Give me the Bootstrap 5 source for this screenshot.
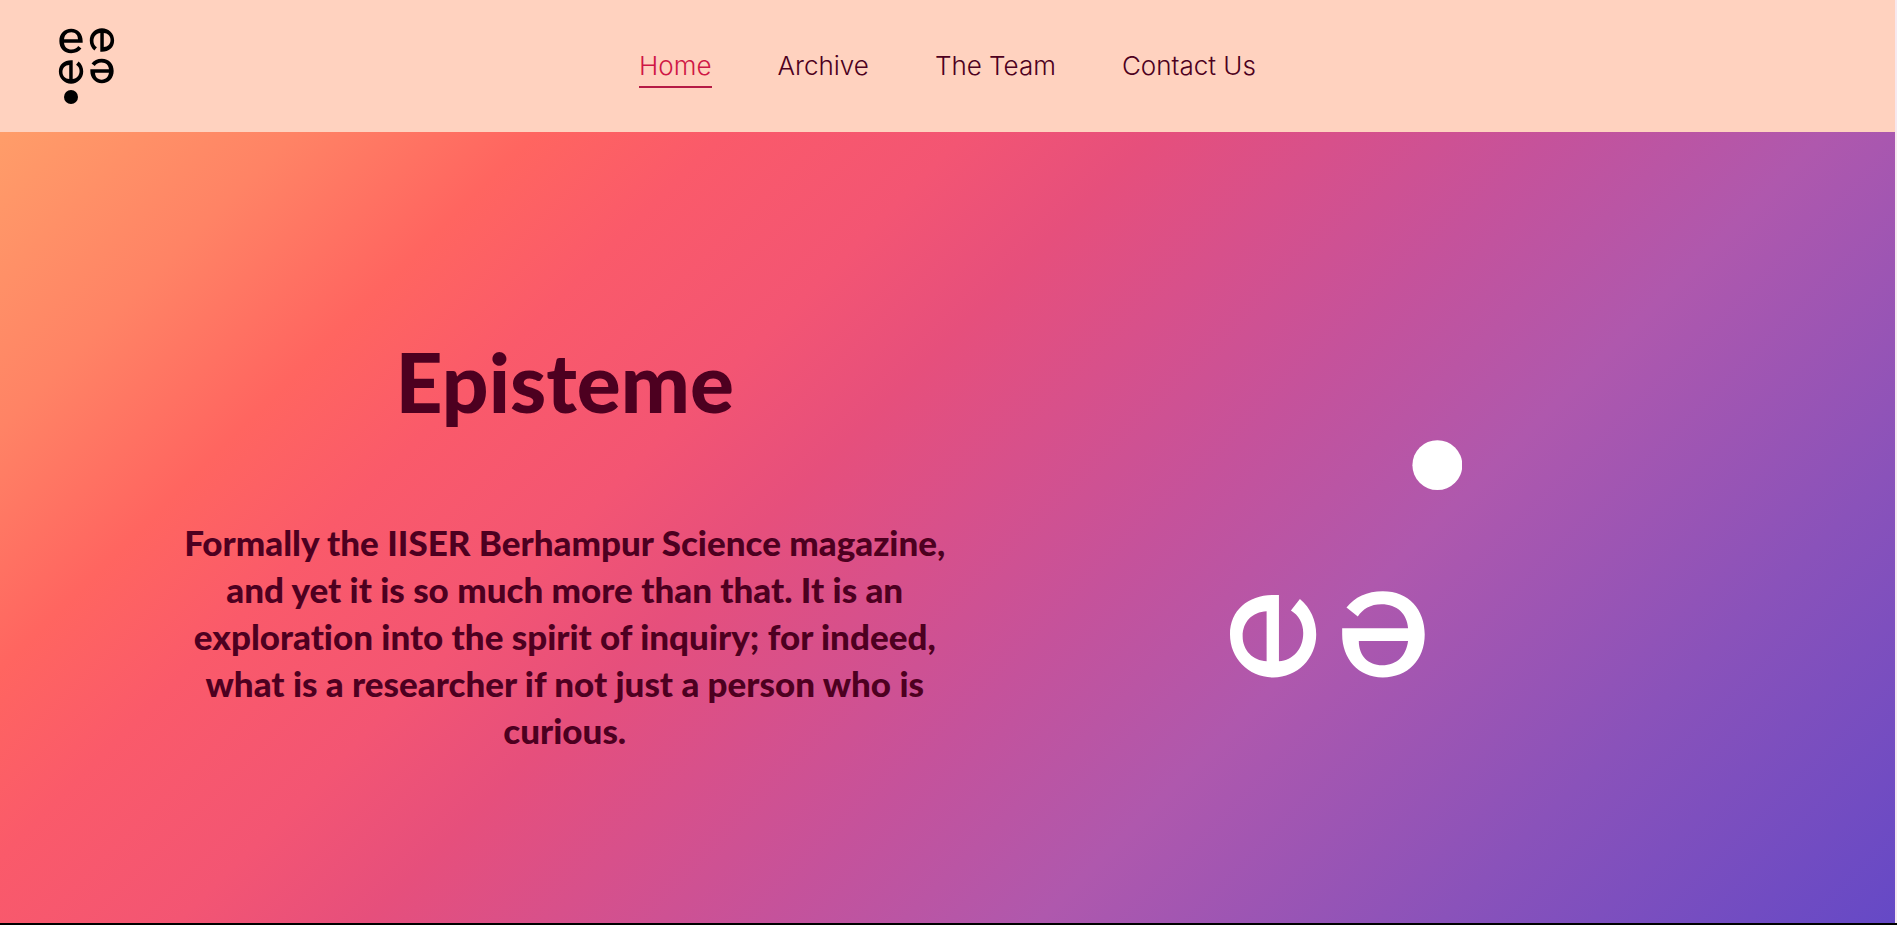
<!DOCTYPE html>
<html lang="en">
<head>
<meta charset="utf-8">
<meta name="viewport" content="width=device-width, initial-scale=1">
<title>Episteme</title>
<link rel="stylesheet" href="https://cdn.jsdelivr.net/npm/bootstrap@5.3.0/dist/css/bootstrap.min.css">
<style>
  :root { --wine: #4d0020; --crimson: #cf1745; --peach: #ffd2bf; }
  body { color: var(--wine); font-family: Lato, "Liberation Sans", sans-serif; background: #000; }
  .page { min-height: 100vh; border-bottom: 2px solid #000; }
  .sheet { border-right: 2px solid #f6e9f0; }
  .site-header { background: var(--peach); display: grid; grid-template-columns: 1fr auto 1fr; min-height: 132px; padding: 0 56px; }
  .brand-mark { width: 60px; height: 80px; }
  .site-nav { gap: 66px; font-family: Inter, "Open Sans", sans-serif; font-weight: 300; font-size: 26px; line-height: 32px; }
  .site-nav .nav-link { color: var(--wine); padding: 6px 0 4px; border-bottom: 2px solid transparent; }
  .site-nav .nav-link.active { color: var(--crimson); border-color: #b51b45; }
  .hero { padding: 0 158px 0 174px; background: linear-gradient(135deg, #ff9d69 0%, #ff8365 11%, #ff6560 20%, #fa5a6a 27%, #f35573 36%, #e64f7c 43%, #d7508b 50%, #c5529b 58%, #af58ad 68%, #8a52ba 83%, #6549c6 100%); }
  .hero-copy { padding-top: 32px; }
  .hero-title { font-size: 82px; line-height: 96px; font-weight: 900; margin-bottom: 90px; }
  .hero-text { font-size: 35px; line-height: 47px; font-weight: 900; font-variant-ligatures: none; }
  .hero-art { width: 232px; height: 238px; margin-top: 62px; }
</style>
</head>
<body>
<svg class="d-none" aria-hidden="true">
  <defs>
    <path id="turned" fill-rule="evenodd" d="M240 521V720C283 717 313 683 313 635C313 606 299 582 276 568L303 533C335 560 352 597 352 640C352 712 295 769 223 769C150 769 93 712 93 640C93 565 150 521 222 521ZM203 570C160 572 131 602 131 645C131 688 162 718 203 720Z"/>
    <path id="flipped" fill-rule="evenodd" d="M430 621H628C625 578 595 549 548 549C515 549 492 563 477 586L443 559C467 528 505 510 552 510C630 510 678 565 678 640C678 715 628 769 552 769C478 769 430 712 430 640ZM480 659H628C622 703 595 732 550 732C508 732 480 703 480 659Z"/>
  </defs>
</svg>
<div class="page d-flex flex-column">
  <div class="sheet d-flex flex-column flex-grow-1">
    <header class="site-header align-items-center">
      <a href="#" aria-label="Episteme home" class="d-inline-flex">
        <svg class="brand-mark" viewBox="0 0 60 80" fill="#000" aria-hidden="true">
          <use href="#flipped" transform="translate(15 15) rotate(180) scale(.094) translate(-554 -640)"/>
          <use href="#turned" transform="translate(46 14) rotate(180) scale(.094) translate(-222 -645)"/>
          <use href="#turned" transform="translate(15 46) scale(.094) translate(-222 -645)"/>
          <use href="#flipped" transform="translate(46 45) scale(.094) translate(-554 -640)"/>
          <circle cx="15" cy="71" r="7"/>
        </svg>
      </a>
      <nav aria-label="Main">
        <ul class="nav site-nav flex-nowrap">
          <li class="nav-item"><a class="nav-link active" aria-current="page" href="#">Home</a></li>
          <li class="nav-item"><a class="nav-link" href="#">Archive</a></li>
          <li class="nav-item"><a class="nav-link" href="#">The Team</a></li>
          <li class="nav-item"><a class="nav-link" href="#">Contact Us</a></li>
        </ul>
      </nav>
    </header>
    <main class="hero d-flex align-items-center flex-grow-1">
      <div class="row g-0 flex-grow-1 align-items-center">
        <section class="hero-copy col-6 text-center">
          <h1 class="hero-title">Episteme</h1>
          <p class="hero-text mb-0">Formally the IISER Berhampur Science magazine,<br>and yet it is so much more than that. It is an<br>exploration into the spirit of inquiry; for indeed,<br>what is a researcher if not just a person who is<br>curious.</p>
        </section>
        <div class="col-6 text-center">
          <svg class="hero-art" viewBox="93 56 697 714" fill="#fff" role="img" aria-label="Episteme mark">
            <use href="#turned"/>
            <use href="#flipped"/>
            <circle cx="716" cy="131" r="75"/>
          </svg>
        </div>
      </div>
    </main>
  </div>
</div>
<script src="https://cdn.jsdelivr.net/npm/bootstrap@5.3.0/dist/js/bootstrap.bundle.min.js"></script>
</body>
</html>
